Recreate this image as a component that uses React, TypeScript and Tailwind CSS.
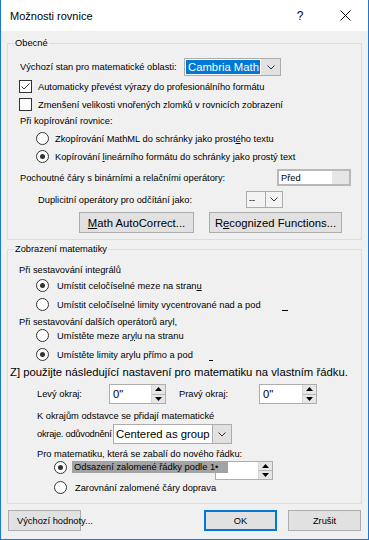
import React from "react";

function Check({ on }: { on?: boolean }) {
  return (
    <span className="w-[13px] h-[13px] border border-[#333333] bg-white flex items-center justify-center shrink-0">
      {on && (
        <svg width="11" height="11" viewBox="0 0 11 11">
          <polyline points="1.5,5.5 4,8 9.5,2.5" fill="none" stroke="#333333" strokeWidth="1" />
        </svg>
      )}
    </span>
  );
}

function Radio({ on }: { on?: boolean }) {
  return (
    <span className="w-[13px] h-[13px] rounded-full border border-[#333333] bg-white flex items-center justify-center shrink-0">
      {on && <span className="w-[5px] h-[5px] rounded-full bg-[#333333]" />}
    </span>
  );
}

function Chev() {
  return (
    <svg width="8" height="5" viewBox="0 0 8 5">
      <polyline points="0.5,0.5 4,4 7.5,0.5" fill="none" stroke="#333333" strokeWidth="1" />
    </svg>
  );
}

function SpinArrows() {
  return (
    <div className="w-[14px] flex flex-col border-l border-[#d5d5d5] bg-[#e6e6e6]">
      <div className="flex-1 flex items-center justify-center border-b border-[#b5b5b5]">
        <svg width="7" height="4" viewBox="0 0 7 4">
          <polygon points="0,4 3.5,0 7,4" fill="#000" />
        </svg>
      </div>
      <div className="flex-1 flex items-center justify-center">
        <svg width="7" height="4" viewBox="0 0 7 4">
          <polygon points="0,0 3.5,4 7,0" fill="#000" />
        </svg>
      </div>
    </div>
  );
}

export default function App() {
  return (
    <div className="w-[369px] h-[540px] bg-[#f0f0f0] border-x border-b border-[#1a78d2] font-['Liberation_Sans',Arial,sans-serif] text-[9.3px] leading-[12px] text-black flex flex-col overflow-hidden">
      {/* title bar */}
      <div className="h-[31px] bg-white flex items-center shrink-0">
        <span className="ml-[9px] text-[11px]">Možnosti rovnice</span>
        <span className="ml-auto w-[20px] text-center text-[12px]">?</span>
        <span className="ml-[25px] mr-[13px] w-[20px] flex justify-center">
          <svg width="11" height="11" viewBox="0 0 11 11">
            <path d="M0.5 0.5 L10.5 10.5 M10.5 0.5 L0.5 10.5" stroke="#000" strokeWidth="1" />
          </svg>
        </span>
      </div>

      {/* Obecné */}
      <div className="relative mx-[6px] mt-[12px] border border-[#dcdcdc] pl-[12px] pb-[6px] flex flex-col">
        <span className="absolute -top-[7px] left-[6px] px-[1px] bg-[#f0f0f0]">Obecné</span>

        <div className="mt-[14px] h-[18px] flex items-center">
          <span className="w-[164px]">Výchozí stan pro matematické oblasti:</span>
          <div className="w-[97px] h-[18px] border border-[#acacac] bg-white flex">
            <div className="flex-1 m-[1px] bg-[#0078d7] text-white text-[11.3px] leading-[14px] pl-[2px] flex items-center">
              Cambria Math
            </div>
            <div className="w-[19px] bg-[#e1e1e1] flex items-center justify-center">
              <Chev />
            </div>
          </div>
        </div>

        <div className="mt-[4px] h-[13px] flex items-center -ml-[1px]">
          <Check on />
          <span className="ml-[6px]">Automaticky převést výrazy do profesionálního formátu</span>
        </div>
        <div className="mt-[5px] h-[13px] flex items-center -ml-[1px]">
          <Check />
          <span className="ml-[6px]">Zmenšení velikosti vnořených zlomků v rovnicích zobrazení</span>
        </div>

        <div className="mt-[4px] h-[12px] flex items-center">Při kopírování rovnice:</div>
        <div className="mt-[5px] h-[13px] flex items-center ml-[16px]">
          <Radio />
          <span className="ml-[6px]">
            Zkopírování MathML do schránky jako prost<u>é</u>ho textu
          </span>
        </div>
        <div className="mt-[5px] h-[13px] flex items-center ml-[16px]">
          <Radio on />
          <span className="ml-[6px]">
            Kopírování <u>l</u>ineárního formátu do schránky jako prostý text
          </span>
        </div>

        <div className="mt-[6px] h-[17px] flex items-center">
          <span className="w-[257px]">Pochoutné čáry s binárními a relačními operátory:</span>
          <div className="w-[74px] h-[17px] border-2 border-[#b9b9b9] flex">
            <div className="w-[53px] bg-white pl-[2px] flex items-center">Před</div>
            <div className="flex-1 bg-[#e6e6e6]" />
          </div>
        </div>

        <div className="mt-[5px] h-[17px] flex items-center pl-[18px]">
          <span className="w-[208px]">Duplicitní operátory pro odčítání jako:</span>
          <div className="w-[37px] h-[17px] border border-[#acacac] bg-[#f3f3f3] flex">
            <div className="w-[18px] pl-[2px] flex items-center">--</div>
            <div className="flex-1 border-l border-[#acacac] flex items-center justify-center">
              <Chev />
            </div>
          </div>
        </div>

        <div className="mt-[4px] h-[21px] flex">
          <button className="ml-[59px] w-[115px] h-[21px] bg-[#e1e1e1] border border-[#adadad] text-[11.3px]">
            <u>M</u>ath AutoCorrect...
          </button>
          <button className="ml-[15px] w-[133px] h-[21px] bg-[#e1e1e1] border border-[#adadad] text-[11.3px]">
            R<u>e</u>cognized Functions...
          </button>
        </div>
      </div>

      {/* Zobrazení matematiky */}
      <div className="relative mx-[6px] mt-[9px] border border-[#dcdcdc] pl-[11px] pb-[9px] flex flex-col">
        <span className="absolute -top-[7px] left-[6px] px-[1px] bg-[#f0f0f0]">Zobrazení matematiky</span>

        <div className="mt-[14px] h-[12px] flex items-center">Při sestavování integrálů</div>
        <div className="mt-[3px] h-[13px] flex items-center ml-[17px]">
          <Radio on />
          <span className="ml-[8px]">Umístit celočíselné meze na stran<u>u</u></span>
        </div>
        <div className="mt-[6px] h-[13px] flex items-center ml-[17px]">
          <Radio />
          <span className="ml-[8px]">Umístit celočíselné limity vycentrované nad a pod</span>
          <span className="ml-[21px] mt-[12px] w-[6px] h-px bg-black" />
        </div>

        <div className="mt-[5px] h-[12px] flex items-center">Při sestavování dalších operátorů aryl,</div>
        <div className="mt-[1px] h-[13px] flex items-center ml-[17px]">
          <Radio />
          <span className="ml-[8px]">Umístěte meze ar<u>y</u>lu na stranu</span>
        </div>
        <div className="mt-[6px] h-[13px] flex items-center ml-[17px]">
          <Radio on />
          <span className="ml-[8px]">Umístěte limity arylu přímo a pod</span>
          <span className="ml-[16px] mt-[12px] w-[4px] h-px bg-black" />
        </div>

        <div className="mt-[4px] h-[14px] flex items-center -ml-[9px] text-[11.3px]">
          Z] použijte následující nastavení pro matematiku na vlastním řádku.
        </div>

        <div className="mt-[5px] h-[20px] flex items-center pl-[18px]">
          <span className="w-[72px]">Levý okraj:</span>
          <div className="w-[57px] h-[20px] border border-[#adadad] bg-white flex">
            <div className="flex-1 pl-[3px] text-[11.3px] flex items-center">0"</div>
            <SpinArrows />
          </div>
          <span className="ml-[13px] w-[80px]">Pravý okraj:</span>
          <div className="w-[58px] h-[20px] border border-[#adadad] bg-white flex">
            <div className="flex-1 pl-[3px] text-[11.3px] flex items-center">0"</div>
            <SpinArrows />
          </div>
        </div>

        <div className="mt-[6px] h-[12px] flex items-center pl-[18px]">
          K okrajům odstavce se přidají matematické
        </div>
        <div className="mt-[2px] h-[20px] flex items-center pl-[18px]">
          <span className="w-[76px] shrink-0 whitespace-nowrap tracking-[-0.25px]">okraje. odůvodnění</span>
          <div className="w-[119px] h-[20px] shrink-0 border border-[#acacac] bg-white flex">
            <div className="flex-1 pl-[2px] text-[11.3px] flex items-center">Centered as group</div>
            <div className="w-[19px] bg-[#e1e1e1] border-l border-[#acacac] flex items-center justify-center">
              <Chev />
            </div>
          </div>
        </div>

        <div className="mt-[4px] h-[12px] flex items-center pl-[18px]">
          Pro matematiku, která se zabalí do nového řádku:
        </div>
        <div className="mt-[1px] h-[18px] flex items-start ml-[35px]">
          <Radio on />
          <span className="relative z-10 ml-[5px] w-[156px] h-[12px] bg-[#a3a3a3] pl-[2px] flex items-center">
            Odsazení zalomené řádky podle 1•
          </span>
          <div className="-ml-[13px] w-[58px] h-[19px] border border-[#adadad] bg-white flex">
            <div className="flex-1" />
            <SpinArrows />
          </div>
        </div>
        <div className="mt-[2px] h-[13px] flex items-center ml-[35px]">
          <Radio />
          <span className="ml-[8px]">Zarovnání zalomené čáry doprava</span>
        </div>
      </div>

      {/* buttons */}
      <div className="mt-[6px] h-[21px] flex">
        <button className="ml-[7px] w-[73px] h-[21px] bg-[#e1e1e1] border border-[#adadad] pl-[8px] text-left whitespace-nowrap overflow-visible">
          Výchozí hodnoty...
        </button>
        <button className="ml-[123px] w-[73px] h-[21px] bg-[#e1e1e1] border-2 border-[#0078d7]">OK</button>
        <button className="ml-[11px] w-[73px] h-[21px] bg-[#e1e1e1] border border-[#adadad]">Zrušit</button>
      </div>
    </div>
  );
}
